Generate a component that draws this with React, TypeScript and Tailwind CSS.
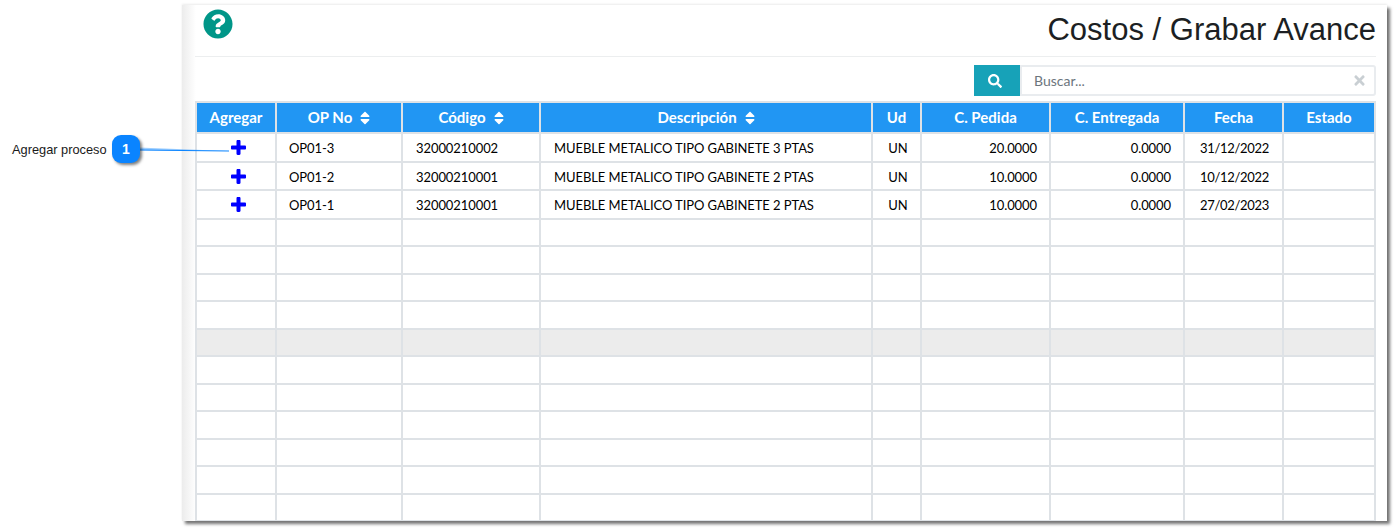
import React from "react";
import { FaQuestionCircle, FaSearch, FaSort, FaTimes } from "react-icons/fa";

const columns = [
  { label: "Agregar", width: 80 },
  { label: "OP No", width: 126, sort: true },
  { label: "Código", width: 138, sort: true },
  { label: "Descripción", width: 332, sort: true },
  { label: "Ud", width: 49 },
  { label: "C. Pedida", width: 129 },
  { label: "C. Entregada", width: 134 },
  { label: "Fecha", width: 99 },
  { label: "Estado", width: 92 },
];

const rows = [
  { op: "OP01-3", code: "32000210002", desc: "MUEBLE METALICO TIPO GABINETE 3 PTAS", qty: "20.0000", date: "31/12/2022" },
  { op: "OP01-2", code: "32000210001", desc: "MUEBLE METALICO TIPO GABINETE 2 PTAS", qty: "10.0000", date: "10/12/2022" },
  { op: "OP01-1", code: "32000210001", desc: "MUEBLE METALICO TIPO GABINETE 2 PTAS", qty: "10.0000", date: "27/02/2023" },
];

const emptyHeights = [27, 28, 27, 28, 27, 28, 27, 28, 27, 28, 27];

const cell = "border-2 border-[#dee2e6] p-0";

function PlusIcon() {
  return (
    <svg className="mt-[1px] ml-[34px] block text-[#0000ff]" width="15" height="15" viewBox="0 0 15 15" fill="currentColor">
      <path d="M5.5 1.2C5.5.5 6 0 6.6 0h1.8c.6 0 1.1.5 1.1 1.2v4.3h4.3c.7 0 1.2.5 1.2 1.1v1.8c0 .6-.5 1.1-1.2 1.1H9.500v4.300c0 .7-.5 1.200-1.100 1.200H6.600c-.6 0-1.100-.5-1.100-1.200V9.500H1.200C.5 9.500 0 9 0 8.400V6.600c0-.6.5-1.100 1.200-1.100h4.300z" />
    </svg>
  );
}

export default function App() {
  return (
    <div className="relative h-[531px] w-[1394px] overflow-hidden bg-white pt-[5px] pl-[182px] font-['Lato',sans-serif] text-[13px] text-[#212529]">
      <div className="relative h-[516px] w-[1205px] overflow-hidden bg-gradient-to-r from-[#ececec] from-0% to-white to-[14px] pr-[11px] pl-[13px]">
        <div className="flex h-[52px] items-start justify-between border-b border-[#eceeef]">
          <FaQuestionCircle className="mt-[4px] ml-[8px] text-[#009688]" size={30} />
          <h1 className="mt-[7px] font-['Liberation_Sans',sans-serif] text-[31px] leading-[36px] text-[#1c1f23]">Costos / Grabar Avance</h1>
        </div>
        <div className="mt-[8px] flex h-[31px] justify-end">
          <div className="flex w-[46px] items-center justify-center bg-[#17a2b8] pr-[4px] text-white">
            <FaSearch size={14} />
          </div>
          <div className="flex w-[356px] items-center justify-between rounded-r-[3px] border-2 border-[#e9ecef] pr-[7px] pl-[12px] text-[#6c757d]">
            <span className="text-[14px]">Buscar...</span>
            <FaTimes className="text-[#c9cfd3]" size={15} />
          </div>
        </div>
        <table className="mt-[5px] table-fixed border-collapse border-2 border-[#dee2e6]" style={{ width: 1179 }}>
          <colgroup>
            {columns.map((c) => (
              <col key={c.label} style={{ width: c.width }} />
            ))}
          </colgroup>
          <thead>
            <tr className="h-[31px] bg-[#2196f3] text-[15px] font-bold text-white">
              {columns.map((c) => (
                <th key={c.label} className={cell}>
                  <span className="inline-flex items-center justify-center gap-[8px]">
                    {c.label}
                    {c.sort && <FaSort className="h-[16px] w-[10px]" />}
                  </span>
                </th>
              ))}
            </tr>
          </thead>
          <tbody>
            {rows.map((r) => (
              <tr key={r.op} className="h-[28.5px] tracking-[-0.08px] text-black">
                <td className={cell}>
                  <PlusIcon />
                </td>
                <td className={`${cell} pt-[3px] pl-[12px]`}>{r.op}</td>
                <td className={`${cell} pt-[3px] pl-[13px]`}>{r.code}</td>
                <td className={`${cell} pt-[3px] pl-[13px]`}>{r.desc}</td>
                <td className={`${cell} pt-[3px] pl-[3px] text-center`}>UN</td>
                <td className={`${cell} pt-[3px] pr-[12px] text-right`}>{r.qty}</td>
                <td className={`${cell} pt-[3px] pr-[12px] text-right`}>0.0000</td>
                <td className={`${cell} pt-[3px] pl-[2px] text-center tracking-[-0.3px]`}>{r.date}</td>
                <td className={cell}></td>
              </tr>
            ))}
            {emptyHeights.map((h, i) => (
              <tr key={i} className={i === 4 ? "bg-[#ececec]" : ""} style={{ height: h }}>
                {columns.map((c) => (
                  <td key={c.label} className={cell}></td>
                ))}
              </tr>
            ))}
          </tbody>
        </table>
      </div>
      {/* sombra del panel */}
      <div className="pointer-events-none absolute top-[5px] left-[182px] h-[516px] w-[1205px] shadow-[3px_3px_3px_rgba(0,0,0,0.55),0_-1px_2px_rgba(0,0,0,0.08)]" />
      {/* llamada */}
      <span className="absolute top-[142px] left-[12px] font-['Liberation_Sans',sans-serif] text-[12.800px] leading-[16px] text-[#1a1a1a]">Agregar proceso</span>
      <svg className="absolute top-[145px] left-[138px]" width="92" height="10">
        <polygon points="0,2.500 0,5 91,6" fill="#0a84ff" fillOpacity="0.4" />
        <line x1="0" y1="5" x2="91" y2="6" stroke="#0a84ff" strokeWidth="1" />
      </svg>
      <div className="absolute top-[135px] left-[112px] flex h-[28px] w-[28px] items-center justify-center rounded-[9px] bg-[#0a84ff] font-['Liberation_Sans',sans-serif] text-[14px] font-bold text-white shadow-[2px_2px_3px_rgba(0,0,0,0.5)]">1</div>
    </div>
  );
}
